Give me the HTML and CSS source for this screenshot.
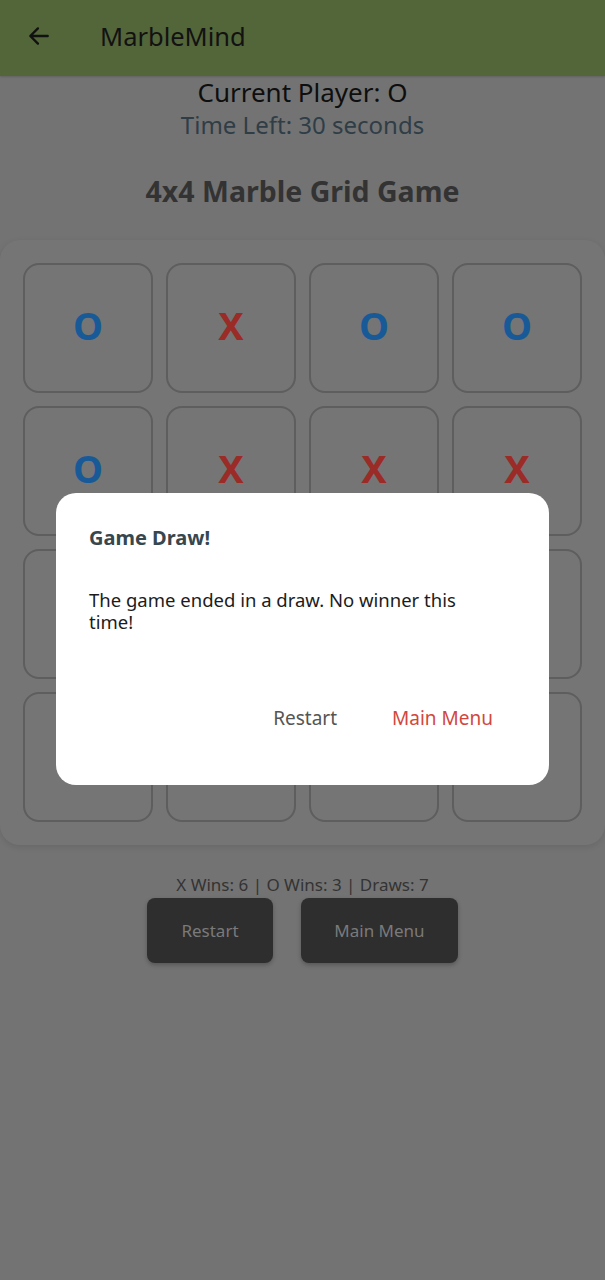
FILE: index.html
```html
<!DOCTYPE html>
<html lang="en">
<head>
<meta charset="utf-8">
<title>MarbleMind</title>
<link rel="stylesheet" href="styles.css">
</head>
<body>
<header class="appbar">
  <svg class="back" width="26" height="26" viewBox="0 0 24 24" aria-hidden="true">
    <path d="M20 12H4.5M11 5l-7 7 7 7" fill="none" stroke="#111" stroke-width="2.2" stroke-linecap="round" stroke-linejoin="round"/>
  </svg>
  <h1 class="title">MarbleMind</h1>
</header>
<main class="game">
  <p class="player">Current Player: O</p>
  <p class="timer">Time Left: 30 seconds</p>
  <h2 class="heading">4x4 Marble Grid Game</h2>
  <section class="card">
    <div class="grid">
      <div class="cell o">O</div><div class="cell x">X</div><div class="cell o">O</div><div class="cell o">O</div>
      <div class="cell o">O</div><div class="cell x">X</div><div class="cell x">X</div><div class="cell x">X</div>
      <div class="cell"></div><div class="cell"></div><div class="cell"></div><div class="cell"></div>
      <div class="cell"></div><div class="cell"></div><div class="cell"></div><div class="cell"></div>
    </div>
  </section>
  <p class="stats">X Wins: 6 | O Wins: 3 | Draws: 7</p>
  <div class="actions">
    <button class="btn btn-restart">Restart</button>
    <button class="btn btn-menu">Main Menu</button>
  </div>
</main>
<div class="dialog" role="dialog">
  <h3 class="dialog-title">Game Draw!</h3>
  <p class="dialog-body">The game ended in a draw. No winner this time!</p>
  <div class="dialog-actions">
    <button class="dbtn dbtn-restart">Restart</button>
    <button class="dbtn dbtn-menu">Main Menu</button>
  </div>
</div>
</body>
</html>
```
FILE: styles.css
```css
* { box-sizing: border-box; }
html, body { margin: 0; padding: 0; }
body {
  background: #737373;
  font-family: "Noto Sans", "Open Sans", sans-serif;
  width: 605px;
  height: 1280px;
  overflow: hidden;
}
.appbar {
  height: 76px;
  background: #52663a;
  display: flex;
  align-items: center;
  padding-left: 26px;
  padding-bottom: 4px;
  box-shadow: 0 1px 2px rgba(0,0,0,0.15);
}
.back { display: block; }
.title {
  margin: 0 0 0 48px;
  font-size: 25.5px;
  font-weight: 400;
  color: #121212;
}
.game { text-align: center; }
.player {
  margin: 0;
  height: 32px;
  line-height: 32px;
  font-size: 26px;
  color: #0e0e0e;
}
.timer {
  margin: 0;
  height: 34px;
  line-height: 34px;
  font-size: 24px;
  color: #2f3d47;
}
.heading {
  margin: 0;
  padding-top: 29px;
  line-height: 40px;
  font-size: 28.5px;
  font-weight: 700;
  color: #333;
  height: 62px;
}
.card {
  margin-top: 36px;
  background: #757575;
  border-radius: 20px;
  padding: 23px;
  box-shadow: 0 2px 6px rgba(0,0,0,0.1);
}
.grid {
  display: grid;
  grid-template-columns: repeat(4, 130px);
  grid-auto-rows: 130px;
  gap: 13px;
}
.cell {
  border: 2px solid #5e5e5e;
  border-radius: 16px;
  display: flex;
  align-items: center;
  justify-content: center;
  padding-bottom: 6px;
  font-size: 38px;
  font-weight: 700;
}
.cell.o { color: #185a98; }
.cell.x { color: #9a2b27; }
.stats {
  margin: 30px 0 0;
  line-height: 20px;
  font-size: 17px;
  color: #333;
}
.actions {
  display: flex;
  justify-content: center;
  gap: 28px;
  margin-top: 3px;
}
.btn {
  height: 65px;
  border: none;
  border-radius: 8px;
  background: #2e2e2e;
  color: #7a7a7a;
  font-family: inherit;
  font-size: 17px;
  box-shadow: 0 2px 4px rgba(0,0,0,0.25);
}
.btn-restart { width: 126px; }
.btn-menu { width: 157px; }
.dialog {
  position: fixed;
  left: 56px;
  top: 493px;
  width: 493px;
  height: 292px;
  background: #fff;
  border-radius: 20px;
  padding: 27px 60px 0 33px;
  display: flex;
  flex-direction: column;
}
.dialog-title {
  margin: 0;
  font-size: 20px;
  font-weight: 700;
  color: #37474f;
  line-height: 36px;
}
.dialog-body {
  margin: 33px 0 0;
  font-size: 18.5px;
  line-height: 22px;
  color: #1c1c1c;
  text-align: left;
}
.dialog-actions {
  display: flex;
  justify-content: flex-end;
  gap: 55px;
  margin-top: 73px;
  margin-right: -4px;
}
.dbtn {
  border: none;
  background: none;
  padding: 0;
  font-family: inherit;
  font-size: 19px;
  line-height: 24px;
}
.dbtn-restart { color: #555; }
.dbtn-menu { color: #d2473d; }
```
